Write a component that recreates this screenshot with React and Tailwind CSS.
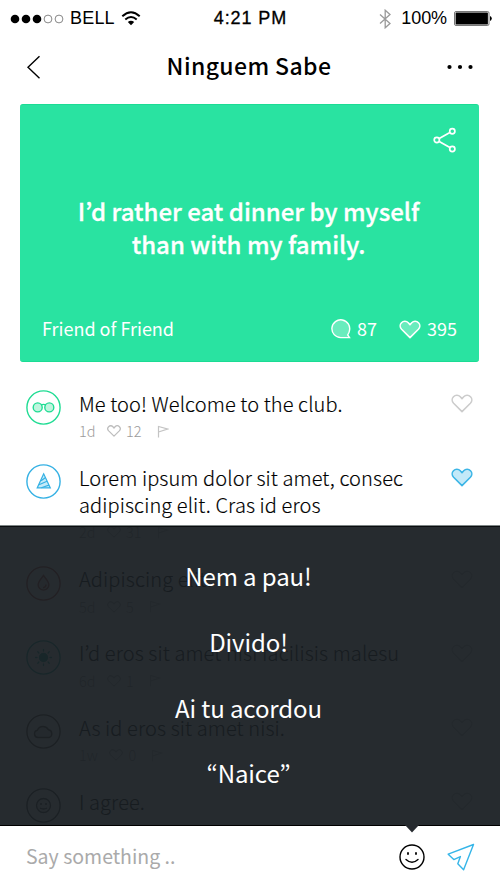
import { useState } from 'react';

const comments = [
  { id: 1, avatar: 'glasses', tint: 'text-[#1fdc93]', text: 'Me too! Welcome to the club.', age: '1d', likes: 12 },
  { id: 2, avatar: 'hat', tint: 'text-[#35b1e4]', text: 'Lorem ipsum dolor sit amet, consec adipiscing elit. Cras id eros', age: '2d', likes: 31, liked: true },
  { id: 3, avatar: 'drop', tint: 'text-[#b0403a]', text: 'Adipiscing elit.', age: '5d', likes: 5 },
  { id: 4, avatar: 'sun', tint: 'text-[#1fa59c]', text: 'I’d eros sit amet nisi facilisis malesu', age: '6d', likes: 1 },
  { id: 5, avatar: 'cloud', tint: 'text-[#54483f]', text: 'As id eros sit amet nisi.', age: '1w', likes: 0 },
  { id: 6, avatar: 'face', tint: 'text-[#444444]', text: 'I agree.' },
];

const replies = ['Nem a pau!', 'Divido!', 'Ai tu acordou', '“Naice”'];

function Heart({ className, strokeWidth = 1.6 }) {
  return (
    <svg viewBox="0 0 22 19" className={className} stroke="currentColor" strokeWidth={strokeWidth} strokeLinejoin="round">
      <path d="M11 17.6 2.6 9.3C.8 7.4.7 4.5 2.5 2.7 4.4.8 7.4.9 9.3 2.8L11 4.7l1.7-1.9c1.9-1.9 4.9-2 6.8-.1 1.8 1.8 1.7 4.7-.1 6.6Z" />
    </svg>
  );
}

function AvatarGlyph({ name }) {
  if (name === 'glasses') {
    return (
      <g>
        <circle cx="11.7" cy="17.4" r="4.5" fill="#bff5de" />
        <circle cx="23.3" cy="17.4" r="4.5" fill="#bff5de" />
        <path d="M15 15q2.5-1.2 5 0" />
      </g>
    );
  }
  if (name === 'hat') {
    return (
      <g strokeWidth="1.2">
        <path d="M17.7 9.8 11.2 23.9h13.1Z" fill="#c5eaf8" />
        <path d="M15 16.8 19.3 13.7M13 20.8 21 17.3M15.3 23.7 23 21.1" />
      </g>
    );
  }
  if (name === 'drop') {
    return (
      <path
        d="M17.5 9.5c2.6 3.4 5.4 6.1 5.4 9.2a5.4 5.4 0 0 1-10.8 0c0-3.1 2.8-5.8 5.4-9.2ZM20 18.5q0 3-3 3.3"
        fill="currentColor"
        fillOpacity=".2"
      />
    );
  }
  if (name === 'sun') {
    return (
      <g>
        <circle cx="17.5" cy="17.5" r="4" fill="currentColor" />
        <path
          d="M17.5 9.5V11M17.5 24v1.5M9.5 17.5H11M24 17.5h1.5M11.8 11.8l1.1 1.1M22.1 22.1l1.1 1.1M11.8 23.2l1.1-1.1M22.1 12.9l1.1-1.1"
          strokeLinecap="round"
        />
      </g>
    );
  }
  if (name === 'cloud') {
    return (
      <path
        d="M12 23.5a3.7 3.7 0 0 1-.6-7.3 6.2 6.2 0 0 1 11.1-.4 4 4 0 0 1 .7 7.7Z"
        fill="currentColor"
        fillOpacity=".2"
      />
    );
  }
  return (
    <g>
      <circle cx="17.5" cy="17.5" r="7" fill="currentColor" fillOpacity=".1" />
      <path d="M14 16h2M19 16h2M14 20q3.5 2 7 0" />
    </g>
  );
}

function Avatar({ name, tint }) {
  return (
    <svg viewBox="0 0 35 35" className={`mt-px size-[35px] shrink-0 ${tint}`} fill="none" stroke="currentColor" strokeWidth="1.4">
      <circle cx="17.5" cy="17.5" r="16.6" />
      <AvatarGlyph name={name} />
    </svg>
  );
}

function Comment({ comment }) {
  return (
    <li className="flex pb-[22.3px]">
      <Avatar name={comment.avatar} tint={comment.tint} />
      <div className="ml-[18px] w-[345px] pt-[0.5px]">
        <p className="text-[20px] leading-[27px] font-light tracking-[0.1px] text-black [-webkit-text-stroke:0.15px_black]">
          {comment.text}
        </p>
        {comment.age && (
          <div className="mt-[4.5px] flex h-5 items-center text-[14.5px] leading-5 font-light text-[#9b9b9b]">
            <span>{comment.age}</span>
            <Heart className="ml-[11.5px] h-3 w-[14px] fill-none text-[#bdbdbd]" strokeWidth={2} />
            <span className="ml-[5px]">{comment.likes}</span>
            <svg viewBox="0 0 12 13" className="ml-[15px] h-[13px] w-3 text-[#c4c4c4]" fill="none" stroke="currentColor" strokeWidth="1.2">
              <path d="M1.5 12.5V1.5L10.5 4 1.5 7" />
            </svg>
          </div>
        )}
      </div>
      <Heart
        className={`mt-[5px] ml-auto h-[19px] w-[22px] ${comment.liked ? 'fill-[#c3e9f8] text-[#3bb5e6]' : 'fill-none text-[#cccccc]'}`}
      />
    </li>
  );
}

function StatusBar() {
  return (
    <div className="grid h-[37px] grid-cols-3 items-center pr-2 pl-[10px] font-['Liberation_Sans',sans-serif] text-[18px] text-black">
      <div className="flex items-center">
        <svg viewBox="0 0 54 10" className="h-[10px] w-[54px]">
          <circle cx="5" cy="5" r="4.3" />
          <circle cx="16" cy="5" r="4.3" />
          <circle cx="27" cy="5" r="4.3" />
          <circle cx="38" cy="5" r="3.9" fill="none" stroke="#555" strokeWidth=".7" />
          <circle cx="49" cy="5" r="3.9" fill="none" stroke="#555" strokeWidth=".7" />
        </svg>
        <span className="ml-1.5 tracking-[0.2px]">BELL</span>
        <svg viewBox="0 0 20 15" className="ml-[6px] h-[15px] w-5" fill="none" stroke="black" strokeWidth="2">
          <path d="M1.3 5.2Q10-2.7 18.7 5.2M4.3 8.5q5.7-5 11.4 0" />
          <path d="M6.8 11.1q3.2-2.5 6.4 0L10 14.3Z" fill="black" stroke="none" />
        </svg>
      </div>
      <span className="pr-px text-center tracking-[0.9px] [-webkit-text-stroke:0.3px_black]">4:21 PM</span>
      <div className="flex items-center justify-end">
        <svg viewBox="0 0 12 20" className="h-5 w-3" fill="none" stroke="#9a9a9a" strokeWidth="1.3">
          <path d="m1 5.5 10 9-4.8 4.3V1.2L11 5.5l-10 9" />
        </svg>
        <span className="ml-[10px] tracking-[-0.1px]">100%</span>
        <svg viewBox="0 0 38 15" className="ml-[7px] h-[15px] w-[38px]">
          <rect x=".5" y=".5" width="34.5" height="14" rx="1.5" fill="none" stroke="#555" strokeWidth=".8" />
          <rect x="1.6" y="1.6" width="32.3" height="11.8" rx=".5" />
          <path d="M36 5q1.8.8 1.8 2.5T36 10Z" />
        </svg>
      </div>
    </div>
  );
}

function Header() {
  return (
    <header className="flex h-[67px] items-center justify-between pr-[27px] pb-[7px] pl-[26px]">
      <button aria-label="Back" className="w-[26px]">
        <svg viewBox="0 0 15 24" className="h-6 w-[15px]" fill="none" stroke="black" strokeWidth="1.4">
          <path d="M13.5 1.3 2 12.3l11.5 11" />
        </svg>
      </button>
      <h1 className="-mt-1 pr-px text-[23px] leading-8 font-medium tracking-[0.4px] text-black">Ninguem Sabe</h1>
      <button aria-label="More">
        <svg viewBox="0 0 26 6" className="h-1.5 w-[26px]">
          <circle cx="2.5" cy="3" r="2.1" />
          <circle cx="13" cy="3" r="2.1" />
          <circle cx="23.5" cy="3" r="2.1" />
        </svg>
      </button>
    </header>
  );
}

function SecretCard() {
  return (
    <section className="mr-[21px] ml-5 flex h-[258px] flex-col rounded-[3px] border-y border-[#1bdc94] bg-[#29e3a1] text-white">
      <svg viewBox="0 0 24 26" className="mt-[22px] mr-[22px] ml-auto h-[26px] w-6" fill="none" stroke="currentColor" strokeWidth="1.7">
        <circle cx="3.8" cy="13" r="2.6" />
        <circle cx="19.3" cy="4.2" r="2.6" />
        <circle cx="19.3" cy="22" r="2.6" />
        <path d="M6.2 11.6 16.9 5.5M6.2 14.4l10.7 6.2" />
      </svg>
      <p className="mt-[41px] pr-0.5 text-center text-[24px] leading-[33px] font-medium [-webkit-text-stroke:0.3px_white]">
        I’d rather eat dinner by myself
        <br />
        than with my family.
      </p>
      <div className="mt-auto mr-[22px] mb-[19px] ml-[22px] flex items-center text-[18px] leading-7">
        <span>Friend of Friend</span>
        <svg viewBox="0 0 20 20" className="mt-0.5 ml-auto size-5" fill="#69ecbd" stroke="currentColor" strokeWidth="1.4">
          <path d="M18.5 18.6H9.7A8.9 8.9 0 1 1 18.4 12q-.3 2-1.7 3.9Z" />
        </svg>
        <span className="ml-1.5">87</span>
        <Heart className="mt-0.5 ml-[22px] h-[19px] w-[22px] fill-[#69ecbd]" />
        <span className="ml-1.5">395</span>
      </div>
    </section>
  );
}

export default function App() {
  const [message, setMessage] = useState('');

  return (
    <div className="flex h-[888px] w-[500px] flex-col overflow-hidden bg-white font-['Noto_Sans_CJK_KR',sans-serif]">
      <StatusBar />
      <Header />
      <SecretCard />

      <div className="relative h-[464px] shrink-0">
        <ul className="h-full overflow-hidden pt-[27px] pr-[27px] pl-[26px]">
          {comments.map((comment) => (
            <Comment key={comment.id} comment={comment} />
          ))}
        </ul>

        {/* Quick replies */}
        <div className="absolute inset-x-0 bottom-0 flex h-[301px] flex-col items-center border-y border-t-[#7d8585] border-b-black bg-[#181e22]/94 pt-[17.6px] pr-[3px] shadow-[inset_0_1px_0_#0a0d0f]">
          {replies.map((reply) => (
            <button key={reply} className="h-[65.6px] text-[24px] tracking-[-0.1px] text-white" onClick={() => setMessage(reply)}>
              {reply}
            </button>
          ))}
          <svg viewBox="0 0 14 8" className="absolute top-full left-[405px] h-2 w-[14px] fill-[#262a2f]">
            <path d="M0 0h14L7 7.5Z" />
          </svg>
        </div>
      </div>

      <form className="flex flex-1 items-center pr-[25px] pl-[26px]" onSubmit={(e) => e.preventDefault()}>
        <input
          type="text"
          value={message}
          onChange={(e) => setMessage(e.target.value)}
          placeholder="Say something .."
          className="mb-0.5 w-[340px] text-[19.5px] text-black placeholder-[#aaaaaa] outline-none"
        />
        <button type="button" aria-label="Quick replies" className="ml-auto">
          <svg viewBox="0 0 26 26" className="size-[26px]" fill="none" stroke="black" strokeWidth="1.4" strokeLinecap="round">
            <circle cx="13" cy="13" r="12" />
            <path d="M7 15.5q6 5.5 12 0" />
            <path d="M9 9v1M17 9v1" strokeWidth="1.8" />
          </svg>
        </button>
        <button aria-label="Send" className="ml-[22px]">
          <svg viewBox="0 0 28 28" className="size-7" fill="none" stroke="#35b5e8" strokeWidth="1.4" strokeLinejoin="round">
            <path d="M26.5 1.5 1.2 11.2l5.6 5.4 6.6-3-2.6 7.2 5.8 6Z" />
          </svg>
        </button>
      </form>
    </div>
  );
}
